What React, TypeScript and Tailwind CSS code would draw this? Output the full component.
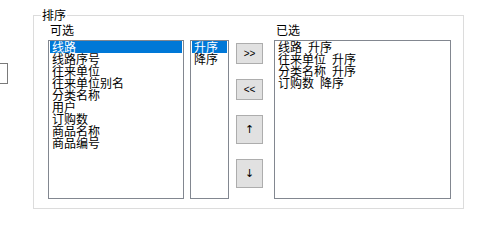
const font = { fontFamily: '"Noto Sans CJK SC", "Liberation Sans", sans-serif' };

type ListBoxProps = {
  items: string[];
  selected?: number;
  className: string;
};

// Windows 风格列表框:灰边,首项蓝色选中
function ListBox({ items, selected, className }: ListBoxProps) {
  return (
    <div className={`h-[159px] border border-[#828790] bg-white p-px pt-0 ${className}`}>
      {items.map((item, i) => (
        <div
          key={item}
          className={`h-[12px] whitespace-pre pl-[2px] text-[12px] leading-[12px] ${
            i === selected ? 'bg-[#0078d7] text-white' : 'text-black'
          }`}
        >
          {item}
        </div>
      ))}
    </div>
  );
}

function MoveButton({ label, tall }: { label: string; tall?: boolean }) {
  return (
    <button
      type="button"
      className={`flex w-[27px] items-center justify-center border border-[#adadad] bg-[#e1e1e1] leading-none text-black ${
        tall ? 'h-[29px] text-[11px] [font-family:"DejaVu_Sans",sans-serif]' : 'h-[21px] text-[10px] [font-family:"Liberation_Sans",sans-serif]'
      }`}
    >
      {label}
    </button>
  );
}

const available = ['线路', '线路序号', '往来单位', '往来单位别名', '分类名称', '用户', '订购数', '商品名称', '商品编号'];
const chosen = ['线路\u2002升序', '往来单位\u2002升序', '分类名称\u2002升序', '订购数\u2002降序'];

export default function App() {
  return (
    <div className="flex h-[235px] w-[486px] items-start overflow-hidden bg-white" style={font}>
      <div className="mt-[63px] h-[21px] w-[8px] shrink-0 border border-l-0 border-[#7a7a7a]" />
      <div className="relative ml-[25px] mt-[15px] h-[194px] w-[431px] shrink-0 border border-[#dcdcdc] pl-[14px] pt-[8px]">
        <span className="absolute left-[7px] top-[-7px] bg-white px-px text-[12px] leading-[12px] text-black">排序</span>
        <div className="flex items-start">
          <div className="flex flex-col">
            <span className="h-[12px] pl-[2px] text-[12px] leading-[12px] text-black">可选</span>
            <ListBox items={available} selected={0} className="mt-[4px] w-[136px]" />
          </div>
          <ListBox items={['升序', '降序']} selected={0} className="ml-[6px] mt-[16px] w-[39px]" />
          <div className="ml-[7px] mt-[19px] flex flex-col gap-[15px]">
            <MoveButton label="&gt;&gt;" />
            <MoveButton label="&lt;&lt;" />
            <MoveButton label="↑" tall />
            <MoveButton label="↓" tall />
          </div>
          <div className="ml-[11px] flex flex-col">
            <span className="h-[12px] pl-[2px] text-[12px] leading-[12px] text-black">已选</span>
            <ListBox items={chosen} className="mt-[4px] w-[177px]" />
          </div>
        </div>
      </div>
    </div>
  );
}
